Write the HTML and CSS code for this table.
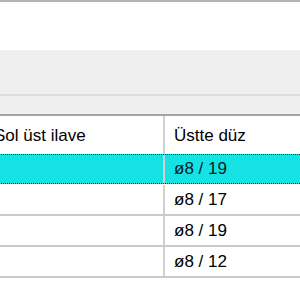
FILE: index.html
```html
<!DOCTYPE html>
<html>
<head>
<meta charset="utf-8">
<link rel="stylesheet" href="styles.css">
</head>
<body>
<div class="window">
  <div class="topline"></div>
  <div class="blank"></div>
  <div class="toolbar"></div>
  <div class="strip"></div>
  <div class="grid">
    <div class="row header">
      <div class="cell c1">Sol üst ilave</div>
      <div class="cell c2">Üstte düz</div>
    </div>
    <div class="row selected">
      <div class="cell c1"></div>
      <div class="cell c2">ø8 / 19</div>
    </div>
    <div class="row">
      <div class="cell c1"></div>
      <div class="cell c2">ø8 / 17</div>
    </div>
    <div class="row">
      <div class="cell c1"></div>
      <div class="cell c2">ø8 / 19</div>
    </div>
    <div class="row">
      <div class="cell c1"></div>
      <div class="cell c2">ø8 / 12</div>
    </div>
  </div>
</div>
</body>
</html>
```
FILE: styles.css
```css
html, body {
  margin: 0;
  padding: 0;
  background: #ffffff;
  overflow: hidden;
}
.window {
  width: 300px;
  height: 300px;
  overflow: hidden;
  display: flex;
  flex-direction: column;
  font-family: "Liberation Sans", Arial, sans-serif;
  font-size: 17px;
  color: #000;
}
.topline {
  height: 2px;
  background: #b4b4b4;
}
.blank {
  height: 48px;
  background: #ffffff;
}
.toolbar {
  height: 44px;
  background: #efefef;
  border-bottom: 2px solid #dcdcdc;
}
.strip {
  height: 18px;
  background: #efefef;
  border-bottom: 2px solid #a2a4aa;
}
.grid {
  display: flex;
  flex-direction: column;
  margin-left: -16px;
  width: 340px;
}
.row {
  display: grid;
  grid-template-columns: 181px 1fr;
  height: 29px;
  border-bottom: 2px solid #c9c9c9;
}
.row.header {
  height: 38px;
  border-bottom: 0;
}
.cell {
  display: flex;
  align-items: center;
  padding-left: 9px;
  white-space: nowrap;
}
.c1 {
  border-right: 2px solid #d0d0d0;
  padding-left: 10px;
}
.header .cell {
  padding-top: 2px;
}
.row.selected {
  background: #15e3e3;
  border-top: 1px dotted #333;
  border-bottom: 1px dotted #333;
  height: 28px;
  margin-bottom: 1px;
  color: #062222;
}
```
